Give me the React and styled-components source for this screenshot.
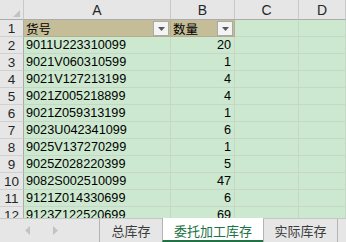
import React from 'react';
import styled, { createGlobalStyle } from 'styled-components';

const GlobalStyle = createGlobalStyle`
	html, body {
		margin: 0;
		padding: 0;
		background: #ffffff;
	}
	body {
		font-family: 'Liberation Sans', 'Noto Sans CJK SC', Arial, sans-serif;
	}
`;

const Sheet = styled.div`
	width: 346px;
	height: 242px;
	display: flex;
	flex-direction: column;
	overflow: hidden;
	background: #ffffff;
`;

const Grid = styled.div`
	flex: 1;
	min-height: 0;
	overflow: hidden;
	display: grid;
	grid-template-columns: 24px 147px 64px 64px 1fr;
	grid-template-rows: 20px;
	grid-auto-rows: 17px;
	align-content: start;
	font-size: 12.7px;
`;

const Corner = styled.div`
	background: #e6e6e6;
	border-right: 1px solid #c8c8c8;
	border-bottom: 1px solid #ababab;
	display: flex;
	align-items: flex-end;
	justify-content: flex-end;
	padding: 0 3px 2px 0;
`;

const ColHead = styled.div`
	background: #e6e6e6;
	border-right: 1px solid #c8c8c8;
	border-bottom: 1px solid #ababab;
	display: flex;
	align-items: center;
	justify-content: center;
	font-size: 14px;
	color: #262626;
`;

const RowHead = styled.div`
	background: #e6e6e6;
	border-right: 1px solid #ababab;
	border-bottom: 1px solid #d0d0d0;
	display: flex;
	align-items: center;
	justify-content: center;
	font-size: 13.5px;
	color: #262626;
`;

const Cell = styled.div`
	background: ${(p) => (p.$head ? '#c4bd97' : '#cce8cf')};
	border-right: 1px solid ${(p) => (p.$head ? '#b4ae8c' : '#c8d6ca')};
	border-bottom: 1px solid ${(p) => (p.$head ? '#b4ae8c' : '#c8d6ca')};
	display: flex;
	align-items: center;
	justify-content: ${(p) => (p.$num ? 'flex-end' : 'flex-start')};
	padding: 0 3px 0 2px;
	color: #000000;
	white-space: nowrap;
	overflow: hidden;
`;

const HeadLabel = styled.span`
	flex: 1;
	font-family: 'Noto Sans CJK SC', sans-serif;
	font-size: 12.5px;
	line-height: 15px;
`;

const FilterButton = styled.span`
	width: 14px;
	height: 13px;
	margin-right: -2px;
	align-self: flex-end;
	background: #f4f4f4;
	border: 1px solid #a9a9a9;
	display: flex;
	align-items: center;
	justify-content: center;
`;

const TabBar = styled.div`
	height: 24px;
	flex: none;
	display: flex;
	background: #e6e6e6;
	border-top: 1px solid #c6c6c6;
	box-sizing: border-box;
`;

const Nav = styled.div`
	width: 99px;
	display: flex;
	align-items: center;
	padding-left: 25px;
	gap: 23px;
	box-sizing: border-box;
`;

const Tab = styled.div`
	width: ${(p) => p.$w}px;
	box-sizing: border-box;
	border-left: 1px solid #b4b4b4;
	display: flex;
	align-items: center;
	justify-content: center;
	font-family: 'Noto Sans CJK SC', sans-serif;
	font-size: 13px;
	color: ${(p) => (p.$active ? '#217346' : '#3c3c3c')};
	background: ${(p) => (p.$active ? '#ffffff' : 'transparent')};
	margin-top: ${(p) => (p.$active ? '-1px' : '0')};
	border-bottom: ${(p) => (p.$active ? '2px solid #217346' : '0')};
	padding-top: ${(p) => (p.$active ? '2px' : '0')};
	${(p) => p.$last && 'border-right: 1px solid #b4b4b4;'}
`;

const rows = [
	['9011U223310099', 20],
	['9021V060310599', 1],
	['9021V127213199', 4],
	['9021Z005218899', 4],
	['9021Z059313199', 1],
	['9023U042341099', 6],
	['9025V137270299', 1],
	['9025Z028220399', 5],
	['9082S002510099', 47],
	['9121Z014330699', 6],
	['9123Z122520699', 69],
];

const DropArrow = () => (
	<svg width='7' height='4' viewBox='0 0 7 4'>
		<polygon points='0,0 7,0 3.5,4' fill='#595959' />
	</svg>
);

const Arrow = ({ dir }) => (
	<svg width='5' height='9' viewBox='0 0 5 9'>
		<polygon points={dir === 'left' ? '5,0 5,9 0,4.5' : '0,0 0,9 5,4.5'} fill='#c3c3c3' />
	</svg>
);

const App = () => {
	return (
		<>
			<GlobalStyle />
			<Sheet>
				<Grid>
					<Corner>
						<svg width='7' height='7' viewBox='0 0 7 7'>
							<polygon points='7,0 7,7 0,7' fill='#c2c2c2' />
						</svg>
					</Corner>
					{['A', 'B', 'C', 'D'].map((c) => (
						<ColHead key={c}>{c}</ColHead>
					))}

					{/* header row */}
					<RowHead>1</RowHead>
					<Cell $head>
						<HeadLabel>货号</HeadLabel>
						<FilterButton>
							<DropArrow />
						</FilterButton>
					</Cell>
					<Cell $head>
						<HeadLabel>数量</HeadLabel>
						<FilterButton>
							<DropArrow />
						</FilterButton>
					</Cell>
					<Cell />
					<Cell />

					{rows.map(([code, qty], i) => (
						<React.Fragment key={code}>
							<RowHead>{i + 2}</RowHead>
							<Cell>{code}</Cell>
							<Cell $num>{qty}</Cell>
							<Cell />
							<Cell />
						</React.Fragment>
					))}
				</Grid>
				<TabBar>
					<Nav>
						<Arrow dir='left' />
						<Arrow dir='right' />
					</Nav>
					<Tab $w={63}>总库存</Tab>
					<Tab $w={101} $active>
						委托加工库存
					</Tab>
					<Tab $w={75} $last>
						实际库存
					</Tab>
				</TabBar>
			</Sheet>
		</>
	);
};

export default App;
